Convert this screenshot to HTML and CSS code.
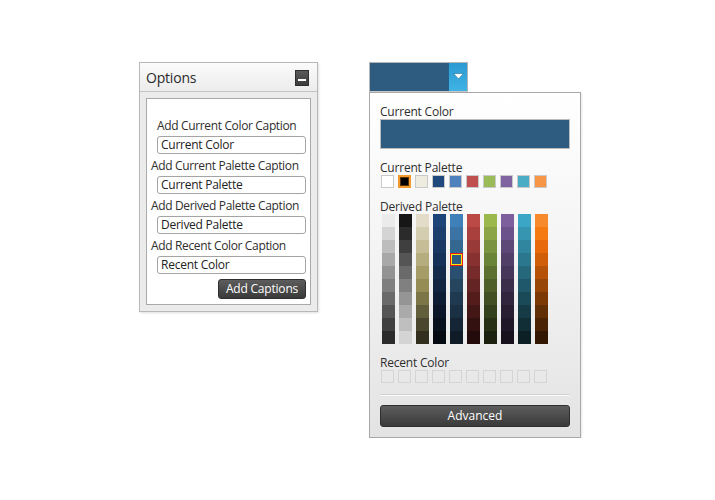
FILE: index.html
```html
<!DOCTYPE html>
<html>
<head>
<meta charset="utf-8">
<link rel="stylesheet" href="styles.css">
</head>
<body>
<div class="stage">
  <section class="options">
    <header class="options-head">
      <span class="options-title">Options</span>
      <button class="min-btn" aria-label="Minimize"><span class="min-bar"></span></button>
    </header>
    <div class="options-body">
      <div class="options-box">
        <div class="field">
          <label class="field-label first">Add Current Color Caption</label>
          <div class="text-input">Current Color</div>
        </div>
        <div class="field">
          <label class="field-label">Add Current Palette Caption</label>
          <div class="text-input">Current Palette</div>
        </div>
        <div class="field">
          <label class="field-label">Add Derived Palette Caption</label>
          <div class="text-input">Derived Palette</div>
        </div>
        <div class="field">
          <label class="field-label">Add Recent Color Caption</label>
          <div class="text-input">Recent Color</div>
        </div>
        <div class="btn-row"><button class="dark-btn caption-btn">Add Captions</button></div>
      </div>
    </div>
  </section>

  <section class="picker">
    <div class="dropdown">
      <div class="dropdown-color"></div>
      <div class="dropdown-arrow">
        <svg width="11" height="7" viewBox="0 0 11 7"><polygon points="0.5,0.5 10.5,0.5 5.5,6" fill="#ffffff" stroke="#1d6f99" stroke-width="0.6"/></svg>
      </div>
    </div>
    <div class="popup">
      <div class="sec-label">Current Color</div>
      <div class="current-bar"></div>

      <div class="sec-label mt">Current Palette</div>
      <div class="swatch-row">
        <span class="swatch" style="background:#ffffff"></span>
        <span class="swatch selected" style="background:#000000"></span>
        <span class="swatch" style="background:#eeece1"></span>
        <span class="swatch" style="background:#1f497d"></span>
        <span class="swatch" style="background:#4f81bd"></span>
        <span class="swatch" style="background:#c0504d"></span>
        <span class="swatch" style="background:#9bbb59"></span>
        <span class="swatch" style="background:#8064a2"></span>
        <span class="swatch" style="background:#4bacc6"></span>
        <span class="swatch" style="background:#f79646"></span>
      </div>

      <div class="sec-label mt2">Derived Palette</div>
      <div class="derived">
        <div class="dcol">
          <i style="background:#ebebeb"></i><i style="background:#d4d4d4"></i><i style="background:#bdbdbd"></i><i style="background:#a8a8a8"></i><i style="background:#939393"></i><i style="background:#7f7f7f"></i><i style="background:#6a6a6a"></i><i style="background:#555555"></i><i style="background:#404040"></i><i style="background:#2b2b2b"></i>
        </div>
        <div class="dcol">
          <i style="background:#161616"></i><i style="background:#2b2b2b"></i><i style="background:#3f3f3f"></i><i style="background:#555555"></i><i style="background:#6a6a6a"></i><i style="background:#808080"></i><i style="background:#959595"></i><i style="background:#aaaaaa"></i><i style="background:#bfbfbf"></i><i style="background:#d4d4d4"></i>
        </div>
        <div class="dcol">
          <i style="background:#e2dcc8"></i><i style="background:#d4cdaf"></i><i style="background:#c6bd96"></i><i style="background:#b6ad7f"></i><i style="background:#a59c68"></i><i style="background:#958b55"></i><i style="background:#7c7548"></i><i style="background:#625d3b"></i><i style="background:#4a462d"></i><i style="background:#322f1f"></i>
        </div>
        <div class="dcol">
          <i style="background:#1d4479"></i><i style="background:#1b3e6d"></i><i style="background:#183762"></i><i style="background:#163157"></i><i style="background:#132a4b"></i><i style="background:#112440"></i><i style="background:#0e1d34"></i><i style="background:#0b1628"></i><i style="background:#08101d"></i><i style="background:#050a12"></i>
        </div>
        <div class="dcol">
          <i style="background:#4080b8"></i><i style="background:#3b73a4"></i><i style="background:#356890"></i><i class="picked" style="background:#2e5b80"></i><i style="background:#2a4f70"></i><i style="background:#26455f"></i><i style="background:#1f3a50"></i><i style="background:#1a3044"></i><i style="background:#152535"></i><i style="background:#0f1b26"></i>
        </div>
        <div class="dcol">
          <i style="background:#bb4a46"></i><i style="background:#a9403d"></i><i style="background:#983b38"></i><i style="background:#873231"></i><i style="background:#762a2a"></i><i style="background:#652424"></i><i style="background:#541d1c"></i><i style="background:#431716"></i><i style="background:#321110"></i><i style="background:#220b0a"></i>
        </div>
        <div class="dcol">
          <i style="background:#9bb84d"></i><i style="background:#8aa446"></i><i style="background:#7a9340"></i><i style="background:#6a8437"></i><i style="background:#5c7030"></i><i style="background:#4e5f29"></i><i style="background:#414f23"></i><i style="background:#33401c"></i><i style="background:#272f15"></i><i style="background:#1b210e"></i>
        </div>
        <div class="dcol">
          <i style="background:#7d5f9d"></i><i style="background:#6c528a"></i><i style="background:#5e4878"></i><i style="background:#523f68"></i><i style="background:#463659"></i><i style="background:#3b2e4b"></i><i style="background:#31263e"></i><i style="background:#281f33"></i><i style="background:#1f1828"></i><i style="background:#16111d"></i>
        </div>
        <div class="dcol">
          <i style="background:#3ba6c6"></i><i style="background:#3695b1"></i><i style="background:#31869f"></i><i style="background:#2b778e"></i><i style="background:#25687c"></i><i style="background:#1f586a"></i><i style="background:#1a4957"></i><i style="background:#163b46"></i><i style="background:#112d36"></i><i style="background:#0b1f25"></i>
        </div>
        <div class="dcol">
          <i style="background:#f78a2d"></i><i style="background:#f57a12"></i><i style="background:#e8690a"></i><i style="background:#d05e09"></i><i style="background:#b55208"></i><i style="background:#984607"></i><i style="background:#7c3906"></i><i style="background:#622e05"></i><i style="background:#4b2304"></i><i style="background:#321702"></i>
        </div>
      </div>

      <div class="sec-label mt3">Recent Color</div>
      <div class="swatch-row">
        <span class="swatch empty"></span><span class="swatch empty"></span><span class="swatch empty"></span><span class="swatch empty"></span><span class="swatch empty"></span><span class="swatch empty"></span><span class="swatch empty"></span><span class="swatch empty"></span><span class="swatch empty"></span><span class="swatch empty"></span>
      </div>

      <div class="separator"></div>
      <button class="dark-btn advanced-btn">Advanced</button>
    </div>
  </section>
</div>
</body>
</html>
```

FILE: styles.css
```css
* { box-sizing: border-box; }

html, body {
  margin: 0;
  padding: 0;
  background: #ffffff;
}

body {
  font-family: "Open Sans", "Noto Sans", "Liberation Sans", sans-serif;
  font-size: 12px;
  color: #333333;
}

.stage {
  display: flex;
  align-items: flex-start;
  padding: 62px 0 0 139px;
  gap: 51px;
}

/* ---------- Options panel ---------- */
.options {
  width: 179px;
  height: 250px;
  border: 1px solid #b8b8b8;
  background: #ebebeb;
  display: flex;
  flex-direction: column;
  box-shadow: 1px 1px 2px rgba(0, 0, 0, 0.12);
}

.options-head {
  height: 29px;
  flex: none;
  display: flex;
  align-items: center;
  justify-content: space-between;
  padding: 0 8px 0 6px;
  background: linear-gradient(#fbfbfb, #ececec);
  border-bottom: 1px solid #c4c4c4;
}

.options-title {
  font-size: 14px;
  color: #2a2a2a;
  letter-spacing: -0.2px;
}

.min-btn {
  width: 14px;
  height: 16px;
  padding: 0;
  border: 1px solid #2e2e2e;
  background: linear-gradient(#5a5a5a, #3c3c3c);
  display: flex;
  align-items: center;
  justify-content: center;
  margin-top: 1px;
}

.min-bar {
  display: block;
  width: 8px;
  height: 2px;
  background: #ffffff;
  margin-top: 4px;
}

.options-body {
  flex: 1;
  padding: 6px;
  display: flex;
}

.options-box {
  flex: 1;
  background: #ffffff;
  border: 1px solid #a9a9a9;
  padding: 16px 4px 0 4px;
  display: flex;
  flex-direction: column;
}

.field {
  display: flex;
  flex-direction: column;
}

.field-label {
  height: 21px;
  padding-top: 1px;
  line-height: 20px;
  white-space: nowrap;
  color: #2e2e2e;
  letter-spacing: -0.35px;
}

.field-label.first {
  padding-left: 6px;
}

.text-input {
  margin: 0 0 1px 6px;
  width: 149px;
  height: 18px;
  border: 1px solid #a4a4a4;
  border-radius: 3px;
  padding: 0 3px;
  line-height: 16px;
  color: #222222;
  background: #ffffff;
  letter-spacing: -0.25px;
}

.btn-row {
  display: flex;
  justify-content: flex-end;
  margin-top: 4px;
}

.dark-btn {
  font-family: inherit;
  color: #ffffff;
  border: 1px solid #2f2f2f;
  border-radius: 3px;
  background: linear-gradient(#5d5d5d, #3a3a3a);
  padding: 0;
  cursor: pointer;
}

.caption-btn {
  width: 88px;
  height: 20px;
  font-size: 12px;
  line-height: 18px;
  letter-spacing: -0.2px;
}

/* ---------- Color picker ---------- */
.picker {
  display: flex;
  flex-direction: column;
  width: 212px;
}

.dropdown {
  width: 99px;
  height: 30px;
  border: 1px solid #b5b5b5;
  border-bottom-color: #c8c8c8;
  display: flex;
  background: #ffffff;
}

.dropdown-color {
  flex: 1;
  background: #2e5b80;
}

.dropdown-arrow {
  width: 19px;
  background: linear-gradient(#2a9ad3, #41b3e3);
  border-left: 1px solid #24628e;
  display: flex;
  align-items: center;
  justify-content: center;
}

.dropdown-arrow svg {
  display: block;
  margin-top: -2px;
}

.popup {
  width: 212px;
  height: 346px;
  border: 1px solid #a8a8a8;
  background: linear-gradient(#ffffff 0%, #f4f4f4 45%, #e3e3e3 100%);
  padding: 10px 10px 0 10px;
  display: flex;
  flex-direction: column;
  box-shadow: 1px 1px 2px rgba(0, 0, 0, 0.10);
}

.sec-label {
  height: 16px;
  padding-top: 1px;
  line-height: 16px;
  color: #2e2e2e;
  letter-spacing: -0.2px;
  overflow: visible;
}

.sec-label.mt { margin-top: 10px; }
.sec-label.mt2 { margin-top: 10px; }
.sec-label.mt3 { margin-top: 10px; }

.current-bar {
  height: 30px;
  border: 1px solid #bdbdbd;
  background: #2e5b80;
}

.swatch-row {
  display: flex;
  gap: 4px;
  padding-left: 1px;
}

.swatch {
  width: 13px;
  height: 13px;
  border: 1px solid #c9c9c9;
  display: block;
}

.swatch.selected {
  border: 2px solid #f39a2c;
  box-shadow: inset 0 0 0 1px #5a3208;
}

.swatch.empty {
  background: transparent;
  border-color: #d4d4d4;
}

.derived {
  display: flex;
  gap: 4px;
  padding-left: 2px;
}

.dcol {
  width: 13px;
  display: flex;
  flex-direction: column;
}

.dcol i {
  display: block;
  height: 13px;
}

.dcol i.picked {
  border: 1px solid #e21a1a;
  box-shadow: inset 0 0 0 1px #ffe600;
}

.separator {
  margin-top: 11px;
  height: 2px;
  border-top: 1px solid #d2d2d2;
  border-bottom: 1px solid #fafafa;
}

.advanced-btn {
  margin-top: 9px;
  height: 22px;
  font-size: 12px;
  line-height: 20px;
  width: 100%;
}
```
